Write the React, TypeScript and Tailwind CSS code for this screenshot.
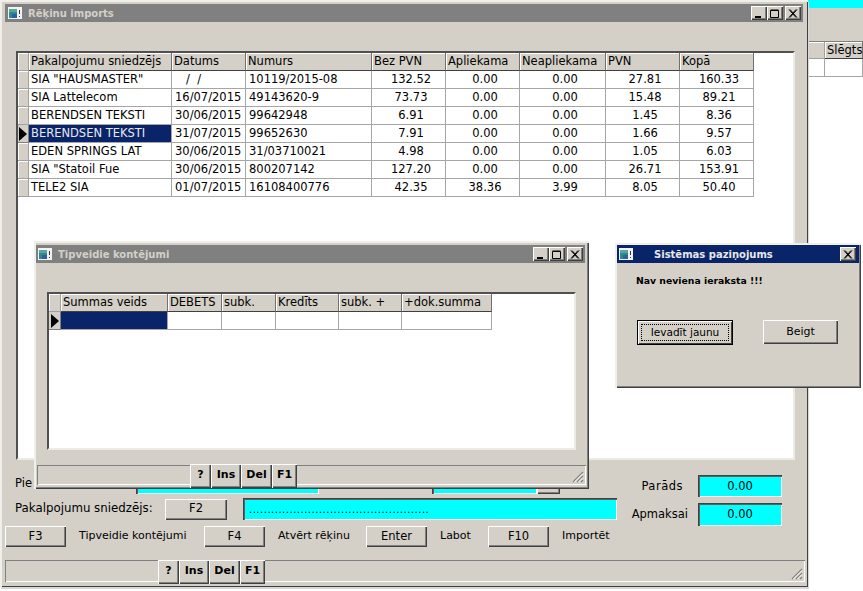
import React from "react";

const raised =
  "bg-[#d4d0c8] shadow-[inset_1px_1px_#ffffff,inset_-1px_-1px_#404040,inset_-2px_-2px_#808080]";
const sunkenCyan =
  "bg-[#00ffff] shadow-[inset_1px_1px_#404040,inset_2px_2px_#606060,inset_-1px_-1px_#ffffff]";

const mainCols = "grid grid-cols-[11px_143px_74px_126px_74px_74px_86px_74px_74px]";
const subCols = "grid grid-cols-[12px_107px_54px_54px_63px_63px_90px]";

const invoiceHead = ["Pakalpojumu sniedzējs", "Datums", "Numurs", "Bez PVN", "Apliekama", "Neapliekama", "PVN", "Kopā"];
const invoices = [
  ["SIA \"HAUSMASTER\"", "   /  /", "10119/2015-08", "132.52", "0.00", "0.00", "27.81", "160.33"],
  ["SIA Lattelecom", "16/07/2015", "49143620-9", "73.73", "0.00", "0.00", "15.48", "89.21"],
  ["BERENDSEN TEKSTI", "30/06/2015", "99642948", "6.91", "0.00", "0.00", "1.45", "8.36"],
  ["BERENDSEN TEKSTI", "31/07/2015", "99652630", "7.91", "0.00", "0.00", "1.66", "9.57"],
  ["EDEN SPRINGS LAT", "30/06/2015", "31/03710021", "4.98", "0.00", "0.00", "1.05", "6.03"],
  ["SIA \"Statoil Fue", "30/06/2015", "800207142", "127.20", "0.00", "0.00", "26.71", "153.91"],
  ["TELE2 SIA", "01/07/2015", "16108400776", "42.35", "38.36", "3.99", "8.05", "50.40"],
];
const postingHead = ["Summas veids", "DEBETS", "subk.", "Kredīts", "subk. +", "+dok.summa"];

const AppIcon = () => (
  <svg width="14" height="12" viewBox="0 0 14 12" className="shrink-0">
    <rect width="14" height="12" fill="#f2f2f2" />
    <rect x="1" y="2" width="8" height="9" fill="#2f8a8f" />
    <rect x="1" y="2" width="8" height="3" fill="#58a89a" />
    <rect x="4" y="7" width="5" height="4" fill="#2f5fa0" />
    <rect x="11" y="3" width="1" height="4" fill="#333" />
    <rect x="11" y="9" width="1" height="1" fill="#333" />
  </svg>
);

const Ctl = ({ kind, className = "" }: { kind: "min" | "max" | "close"; className?: string }) => (
  <div className={`${raised} w-[16px] h-[14px] flex items-center justify-center shrink-0 ${className}`}>
    <svg width="10" height="9" viewBox="0 0 10 9">
      {kind === "min" && <rect x="1" y="7" width="6" height="2" fill="#000" />}
      {kind === "max" && <path d="M0.5 1.5h8v7h-8z M0.5 1h8" fill="none" stroke="#000" />}
      {kind === "close" && <path d="M1 0.5l7 8M2 0.5l7 8M8 0.5l-7 8M9 0.5l-7 8" stroke="#000" fill="none" />}
    </svg>
  </div>
);

const TitleBar = ({ title, className }: { title: string; className: string }) => (
  <div className={`h-[18px] bg-[#808080] flex items-center pr-[2px] ${className}`}>
    <AppIcon />
    <span className="ml-[6px] pt-[1px] font-bold text-[10px] text-[#d4d0c8]">{title}</span>
    <div className="ml-auto flex">
      <Ctl kind="min" />
      <Ctl kind="max" />
      <Ctl kind="close" className="ml-[2px]" />
    </div>
  </div>
);

const Marker = () => (
  <div className="h-full bg-[#d4d0c8] border-r border-b border-[#808080] flex items-center justify-center">
    <div className="w-0 h-0 border-y-[7px] border-y-transparent border-l-[8px] border-l-black" />
  </div>
);

const RowHead = () => <div className="h-full bg-[#d4d0c8] border-r border-b border-[#a0a0a0] shadow-[inset_1px_1px_#ffffff]" />;

const HeadCell = ({ children }: { children?: React.ReactNode }) => (
  <div className="h-full bg-[#d4d0c8] border-r border-b border-r-[#707070] border-b-[#404040] shadow-[inset_1px_1px_#ffffff] pl-[2px] pt-[1px] flex items-center overflow-hidden whitespace-nowrap">
    {children}
  </div>
);

const Cell = ({ children, className = "" }: { children?: React.ReactNode; className?: string }) => (
  <div className={`h-full border-r border-b border-[#a6a6a6] pt-[1px] flex items-center overflow-hidden whitespace-pre ${className}`}>
    {children}
  </div>
);

const Grip = () => (
  <svg width="12" height="12" viewBox="0 0 12 12" className="absolute right-[2px] bottom-[2px]">
    <path d="M11 1L1 11M11 5L5 11M11 9L9 11" stroke="#808080" strokeWidth="1.2" fill="none" />
    <path d="M11 2.5L2.5 11M11 6.5L6.5 11" stroke="#ffffff" strokeWidth="1" fill="none" />
  </svg>
);

const StatusBar = ({ className }: { className: string }) => (
  <div className={`relative flex items-center bg-[#d4d0c8] border-t border-l border-[#808080] shadow-[inset_0_-1px_#ffffff,inset_-1px_0_#ffffff] ${className}`}>
    <div className="flex font-bold text-[11px] h-[24px]">
      <div className={`${raised} w-[21px] flex items-center justify-center`}>?</div>
      <div className={`${raised} w-[30px] flex items-center justify-center`}>Ins</div>
      <div className={`${raised} w-[31px] flex items-center justify-center`}>Del</div>
      <div className={`${raised} w-[25px] flex items-center justify-center`}>F1</div>
    </div>
    <Grip />
  </div>
);

const LabelAfter = ({ text, w }: { text: string; w: string }) => (
  <div className={`${w} pl-[13px] text-[11px] whitespace-nowrap`}>{text}</div>
);

const FnButton = ({ text, className = "w-[61px]" }: { text: string; className?: string }) => (
  <div className={`${raised} h-[21px] flex items-center justify-center shrink-0 ${className}`}>{text}</div>
);

export default function App() {
  return (
    <div className="relative w-[863px] h-[591px] bg-white overflow-hidden font-['DejaVu_Sans',sans-serif] text-[11.5px] text-black">
      {/* window behind, only its right edge shows */}
      <div className="absolute left-[808px] top-0 w-[55px] h-[78px] flex flex-col">
        <div className="h-[8px] bg-[#00ffff]" />
        <div className="h-[33px] bg-[#d4d0c8]" />
        <div className="h-[18px] grid grid-cols-[17px_1fr] border-t border-[#808080]">
          <RowHead />
          <HeadCell>Slēgts</HeadCell>
        </div>
        <div className="h-[18px] grid grid-cols-[17px_1fr]">
          <Cell />
          <Cell />
        </div>
      </div>

      {/* Rēķinu imports */}
      <div className="absolute left-0 top-0 w-[808px] h-[587px] bg-[#d4d0c8] flex flex-col border-t-2 border-l-2 border-[#f0efe9] shadow-[inset_-1px_-1px_#404040,1px_2px_#d8d8d8]">
        <TitleBar title="Rēķinu imports" className="mt-[2px] ml-[3px] mr-[5px] pl-[3px] shrink-0" />

        <div className="mt-[29px] ml-[14px] w-[779px] h-[409px] shrink-0 bg-white border-2 border-t-[#505050] border-l-[#505050] border-r-[#ecebe6] border-b-[#ecebe6]">
          <div className={`${mainCols} h-[18px]`}>
            <RowHead />
            {invoiceHead.map((h) => (
              <HeadCell key={h}>{h}</HeadCell>
            ))}
          </div>
          {invoices.map((row, i) => (
            <div key={i} className={`${mainCols} h-[18px]`}>
              {i === 3 ? <Marker /> : <RowHead />}
              <Cell className={i === 3 ? "pl-[2px] bg-[#0a246a] text-[#e8e8e8]" : "pl-[2px]"}>{row[0]}</Cell>
              <Cell className="pl-[3px]">{row[1]}</Cell>
              <Cell className="pl-[3px]">{row[2]}</Cell>
              {row.slice(3).map((v, j) => (
                <Cell key={j} className="justify-center pl-[5px]">{v}</Cell>
              ))}
            </div>
          ))}
        </div>

        <div className="flex ml-[3px] mt-[13px] h-[74px] shrink-0">
          <div className="w-[612px] flex flex-col">
            <div className="flex items-center h-[21px]">
              <div className="w-[131px] pl-[10px]">Pie</div>
              <div className={`${sunkenCyan} w-[183px] h-[21px]`} />
              <div className={`${sunkenCyan} w-[105px] h-[21px] ml-[113px]`} />
              <div className={`${raised} w-[23px] h-[21px]`} />
            </div>
            <div className="flex items-center h-[22px] mt-[4px]">
              <div className="w-[160px] pl-[10px] text-[11.8px] whitespace-nowrap">Pakalpojumu sniedzējs:</div>
              <FnButton text="F2" className="w-[62px]" />
              <div className={`${sunkenCyan} ml-[16px] w-[374px] h-[22px] flex items-center pl-[6px] overflow-hidden`}>
                <span className="tracking-[0.5px] text-[10px]">.................................................</span>
              </div>
            </div>
            <div className="flex items-center h-[21px] mt-[6px]">
              <FnButton text="F3" />
              <LabelAfter text="Tipveidie kontējumi" w="w-[138px]" />
              <FnButton text="F4" />
              <LabelAfter text="Atvērt rēķinu" w="w-[101px]" />
              <FnButton text="Enter" />
              <LabelAfter text="Labot" w="w-[61px]" />
              <FnButton text="F10" />
              <LabelAfter text="Importēt" w="w-[60px]" />
            </div>
          </div>
          <div className="w-[165px] flex flex-col pt-[2px]">
            <div className="flex items-center h-[22px]">
              <div className="w-[81px] text-right pr-[15px] pt-[1px] tracking-[0.5px]">Parāds</div>
              <div className={`${sunkenCyan} w-[84px] h-[22px] pt-[1px] flex items-center justify-center`}>0.00</div>
            </div>
            <div className="flex items-center h-[23px] mt-[6px]">
              <div className="w-[81px] text-right pr-[10px]">Apmaksai</div>
              <div className={`${sunkenCyan} w-[84px] h-[23px] flex items-center justify-center`}>0.00</div>
            </div>
          </div>
        </div>

        <StatusBar className="mt-[13px] ml-[3px] mr-[3px] h-[22px] pl-[152px] shrink-0" />
      </div>

      {/* Tipveidie kontējumi */}
      <div className="absolute left-[34px] top-[241px] w-[555px] h-[248px] bg-[#d4d0c8] flex flex-col border-t-2 border-l-2 border-[#f0efe9] shadow-[inset_-1px_-1px_#404040,inset_-2px_-2px_#808080]">
        <TitleBar title="Tipveidie kontējumi" className="mt-[2px] mr-[4px] pl-[2px] shrink-0" />
        <div className="mt-[29px] ml-[11px] w-[529px] h-[158px] shrink-0 bg-white border-2 border-t-[#505050] border-l-[#505050] border-r-[#ecebe6] border-b-[#ecebe6]">
          <div className={`${subCols} h-[18px]`}>
            <RowHead />
            {postingHead.map((h) => (
              <HeadCell key={h}>{h}</HeadCell>
            ))}
          </div>
          <div className={`${subCols} h-[18px]`}>
            <Marker />
            <Cell className="bg-[#0a246a]" />
            <Cell />
            <Cell />
            <Cell />
            <Cell />
            <Cell />
          </div>
        </div>
        <StatusBar className="mt-[15px] ml-[1px] mr-[3px] h-[20px] pl-[152px] shrink-0" />
      </div>

      {/* Sistēmas paziņojums */}
      <div className="absolute left-[615px] top-[243px] w-[246px] h-[145px] bg-[#d4d0c8] border-t-2 border-l-2 border-[#f0efe9] shadow-[inset_-1px_-1px_#404040,inset_-2px_-2px_#808080] flex flex-col">
        <div className="h-[18px] bg-[#0a246a] flex items-center pl-[2px] pr-[3px] mr-[2px] shrink-0">
          <AppIcon />
          <span className="ml-[21px] pt-[1px] font-bold text-[10px] text-[#e8e8e8]">Sistēmas paziņojums</span>
          <Ctl kind="close" className="ml-auto" />
        </div>
        <div className="mt-[11px] ml-[19px] font-bold text-[9.3px] leading-[14px]">Nav neviena ieraksta !!!</div>
        <div className="mt-[32px] ml-[20px] flex items-start">
          <div className="w-[96px] h-[25px] border border-black bg-[#d4d0c8] shadow-[inset_1px_1px_#ffffff,inset_-1px_-1px_#404040] p-[3px]">
            <div className="w-full h-full border border-dotted border-black flex items-center justify-center text-[10.5px]">
              Ievadīt jaunu
            </div>
          </div>
          <div className={`${raised} ml-[30px] w-[75px] h-[24px] flex items-center justify-center text-[11px]`}>Beigt</div>
        </div>
      </div>
    </div>
  );
}
